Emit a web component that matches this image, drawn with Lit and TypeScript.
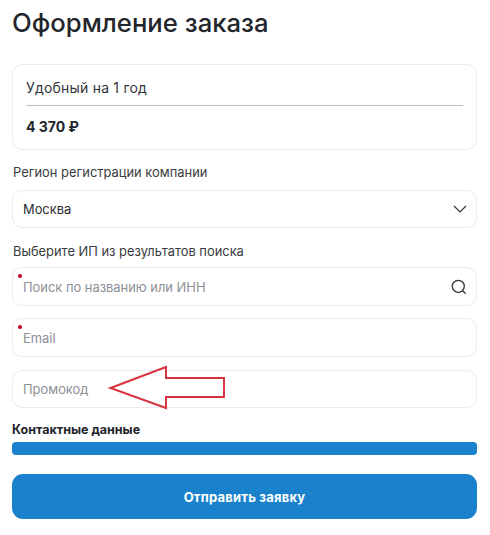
import { LitElement, html, css } from "lit";
import { customElement } from "lit/decorators.js";

@customElement("app-root")
export class AppRoot extends LitElement {
  static styles = css`
    :host {
      display: block;
      position: relative;
      width: 490px;
      height: 535px;
      overflow: hidden;
      background: #fff;
      font-family: Inter, "Noto Sans", sans-serif;
      color: #2b2d33;
    }
    .page {
      display: flex;
      flex-direction: column;
      box-sizing: border-box;
      width: 477px;
      padding-left: 12px;
    }
    h1 {
      margin: 0;
      height: 64px;
      padding-top: 7px;
      box-sizing: border-box;
      font-size: 25.7px;
      line-height: 31px;
      font-weight: 500;
      color: #22252b;
    }
    .card {
      box-sizing: border-box;
      height: 86px;
      border: 1px solid #ebebeb;
      border-radius: 10px;
      padding: 13px 13px 0 13px;
    }
    .plan {
      height: 27px;
      border-bottom: 1px solid #bdbdbd;
      font-size: 14px;
      letter-spacing: 0.2px;
      line-height: 20px;
      color: #33353a;
    }
    .price {
      margin-top: 11px;
      font-size: 14px;
      line-height: 20px;
      font-weight: 700;
      color: #22252b;
    }
    .label {
      margin: 15px 0 0 1px;
      height: 25px;
      font-size: 12.9px;
      line-height: 16px;
      color: #3a3c41;
    }
    .label.second {
      margin-top: 16px;
      height: 23px;
    }
    .field {
      position: relative;
      box-sizing: border-box;
      display: flex;
      align-items: center;
      justify-content: space-between;
      height: 39px;
      border: 1px solid #ebebeb;
      border-radius: 10px;
      padding: 1px 9px 0 10px;
      font-size: 12.9px;
      color: #8d9096;
    }
    .field.value {
      height: 38px;
      padding-top: 0;
      color: #2b2d33;
    }
    .field + .field {
      margin-top: 12px;
    }
    .field.promo {
      height: 38px;
      margin-top: 13px;
    }
    .req {
      position: absolute;
      left: 5px;
      top: 6px;
      width: 3.5px;
      height: 3.5px;
      border-radius: 50%;
      background: #c8102e;
    }
    svg.icon {
      display: block;
      flex: none;
    }
    .contact {
      margin-top: 14px;
      height: 20px;
      font-size: 12.5px;
      line-height: 16px;
      font-weight: 700;
      color: #22252b;
    }
    .bar {
      height: 13px;
      border-radius: 4px;
      background: #1a82cc;
    }
    button {
      display: block;
      margin-top: 19px;
      width: 100%;
      height: 45px;
      border: 0;
      border-radius: 11px;
      background: #1a82cc;
      color: #fff;
      font-family: inherit;
      font-size: 13px;
      letter-spacing: 0.2px;
      font-weight: 700;
    }
    .arrow {
      position: absolute;
      left: 105px;
      top: 362px;
    }
  `;

  render() {
    return html`
      <div class="page">
        <h1>Оформление заказа</h1>
        <div class="card">
          <div class="plan">Удобный на 1 год</div>
          <div class="price">4 370 ₽</div>
        </div>
        <div class="label">Регион регистрации компании</div>
        <div class="field value">
          <span>Москва</span>
          <svg class="icon" width="14" height="8" viewBox="0 0 14 8" fill="none" stroke="#33353a" stroke-width="1.2">
            <path d="M1 1l6 6 6-6" />
          </svg>
        </div>
        <div class="label second">Выберите ИП из результатов поиска</div>
        <div class="field">
          <i class="req"></i>
          <span>Поиск по названию или ИНН</span>
          <svg class="icon" width="16" height="16" viewBox="0 0 16 16" fill="none" stroke="#33353a" stroke-width="1.3">
            <circle cx="7.3" cy="7.3" r="6" />
            <path d="M11.6 11.8l3 3" />
          </svg>
        </div>
        <div class="field">
          <i class="req"></i>
          <span>Email</span>
        </div>
        <div class="field promo"><span>Промокод</span></div>
        <div class="contact">Контактные данные</div>
        <div class="bar"></div>
        <button>Отправить заявку</button>
      </div>
      <svg class="arrow" width="125" height="52" viewBox="105 362 125 52" fill="#fff" stroke="#d8343f" stroke-width="2">
        <path d="M110.5 388L166 367V378H224V397H166V408Z" />
      </svg>
    `;
  }
}
